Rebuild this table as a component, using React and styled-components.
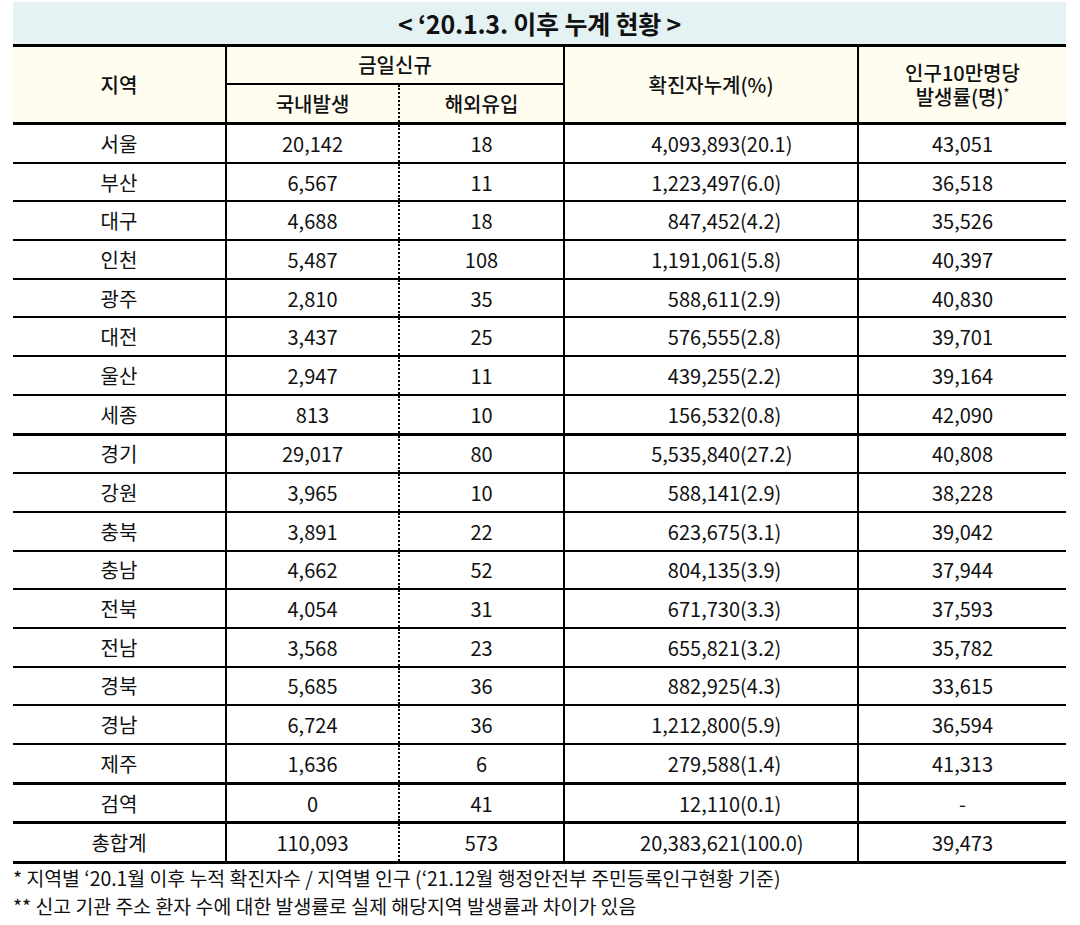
import React from 'react';
import styled, { createGlobalStyle } from 'styled-components';

const FONT = '"Noto Sans CJK KR", "Noto Sans", sans-serif';

const GlobalStyle = createGlobalStyle`
  html, body {
    margin: 0;
    padding: 0;
    background: #ffffff;
  }
  body {
    font-family: ${FONT};
    color: #111111;
  }
`;

const rows = [
  ['서울', '20,142', '18', '4,093,893', '20.1', '43,051'],
  ['부산', '6,567', '11', '1,223,497', '6.0', '36,518'],
  ['대구', '4,688', '18', '847,452', '4.2', '35,526'],
  ['인천', '5,487', '108', '1,191,061', '5.8', '40,397'],
  ['광주', '2,810', '35', '588,611', '2.9', '40,830'],
  ['대전', '3,437', '25', '576,555', '2.8', '39,701'],
  ['울산', '2,947', '11', '439,255', '2.2', '39,164'],
  ['세종', '813', '10', '156,532', '0.8', '42,090'],
  ['경기', '29,017', '80', '5,535,840', '27.2', '40,808'],
  ['강원', '3,965', '10', '588,141', '2.9', '38,228'],
  ['충북', '3,891', '22', '623,675', '3.1', '39,042'],
  ['충남', '4,662', '52', '804,135', '3.9', '37,944'],
  ['전북', '4,054', '31', '671,730', '3.3', '37,593'],
  ['전남', '3,568', '23', '655,821', '3.2', '35,782'],
  ['경북', '5,685', '36', '882,925', '4.3', '33,615'],
  ['경남', '6,724', '36', '1,212,800', '5.9', '36,594'],
  ['제주', '1,636', '6', '279,588', '1.4', '41,313'],
  ['검역', '0', '41', '12,110', '0.1', '-'],
  ['총합계', '110,093', '573', '20,383,621', '100.0', '39,473'],
];

// rows whose bottom line is drawn heavier
const heavyAfter = ['세종', '제주', '검역', '총합계'];

const Page = styled.div`
  padding: 2px 14px 0 13px;
`;

const Title = styled.div`
  height: 42px;
  background: #e4f2f4;
  border-bottom: 3px solid #000;
  display: flex;
  align-items: center;
  justify-content: center;
  font-size: 25px;
  font-weight: 700;
  letter-spacing: -0.2px;
`;

const Table = styled.table`
  width: 1053px;
  border-collapse: collapse;
  table-layout: fixed;
  font-size: 20px;
`;

const Head = styled.th`
  background: #fffcf0;
  font-weight: 500;
  padding: 0;
  height: ${(p) => (p.$sub ? '37px' : '36px')};
  line-height: 1.2;
  border-right: ${(p) => p.$divider || 'none'};
  border-bottom: ${(p) => (p.$last ? '3px solid #000' : '2px solid #000')};
  text-align: center;
  vertical-align: middle;
`;

const Star = styled.sup`
  font-size: 12px;
  line-height: 0;
  vertical-align: 8px;
`;

const Cell = styled.td`
  padding: 0;
  height: 36.7px;
  text-align: center;
  vertical-align: middle;
  border-right: ${(p) => p.$divider || 'none'};
  border-bottom: ${(p) => (p.$heavy ? '3px solid #000' : '2px solid #000')};
`;

const Total = styled.div`
  display: grid;
  grid-template-columns: 175px auto;
  justify-content: start;
`;

const Count = styled.span`
  text-align: right;
`;

const Notes = styled.div`
  padding-top: 0;
  font-size: 19.4px;
  line-height: 28px;
`;

const SOLID = '2px solid #000';
const DOTTED = '2px dotted #000';

const App = () => (
  <>
    <GlobalStyle />
    <Page>
      <Title>&lt; ‘20.1.3. 이후 누계 현황 &gt;</Title>
      <Table>
        <colgroup>
          <col style={{ width: 213 }} />
          <col style={{ width: 173 }} />
          <col style={{ width: 165 }} />
          <col style={{ width: 294 }} />
          <col style={{ width: 208 }} />
        </colgroup>
        <thead>
          <tr>
            <Head rowSpan={2} $divider={SOLID} $last>
              지역
            </Head>
            <Head colSpan={2} $divider={SOLID}>
              금일신규
            </Head>
            <Head rowSpan={2} $divider={SOLID} $last>
              확진자누계(%)
            </Head>
            <Head rowSpan={2} $last>
              인구10만명당
              <br />
              발생률(명)<Star>*</Star>
            </Head>
          </tr>
          <tr>
            <Head $sub $divider={DOTTED} $last>
              국내발생
            </Head>
            <Head $sub $divider={SOLID} $last>
              해외유입
            </Head>
          </tr>
        </thead>
        <tbody>
          {rows.map(([region, domestic, overseas, total, pct, rate]) => {
            const heavy = heavyAfter.includes(region);
            return (
              <tr key={region}>
                <Cell $divider={SOLID} $heavy={heavy}>
                  {region}
                </Cell>
                <Cell $divider={DOTTED} $heavy={heavy}>
                  {domestic}
                </Cell>
                <Cell $divider={SOLID} $heavy={heavy}>
                  {overseas}
                </Cell>
                <Cell $divider={SOLID} $heavy={heavy}>
                  <Total>
                    <Count>{total}</Count>
                    <span>({pct})</span>
                  </Total>
                </Cell>
                <Cell $heavy={heavy}>{rate}</Cell>
              </tr>
            );
          })}
        </tbody>
      </Table>
      <Notes>
        <div>* 지역별 ‘20.1월 이후 누적 확진자수 / 지역별 인구 (‘21.12월 행정안전부 주민등록인구현황 기준)</div>
        <div>** 신고 기관 주소 환자 수에 대한 발생률로 실제 해당지역 발생률과 차이가 있음</div>
      </Notes>
    </Page>
  </>
);

export default App;
